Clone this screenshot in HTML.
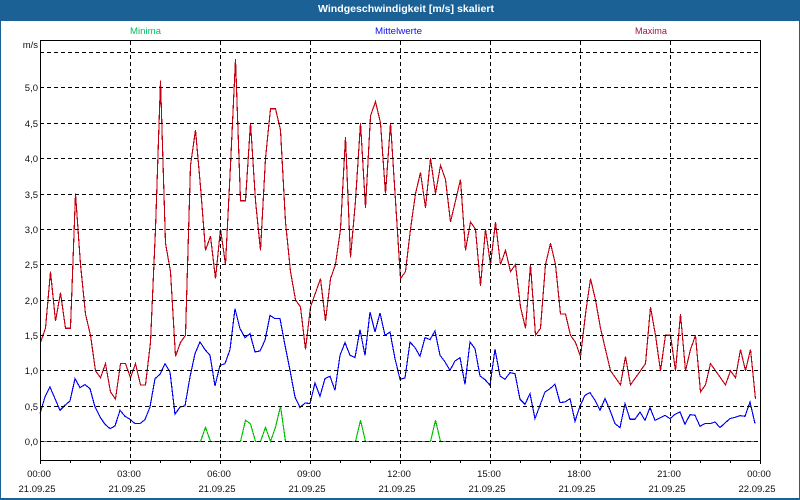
<!DOCTYPE html>
<html>
<head>
<meta charset="utf-8">
<style>
html,body{margin:0;padding:0;background:#fff;}
svg{display:block;font-family:"Liberation Sans",sans-serif;}
text{font-size:9.5px;fill:#111;}
.d{stroke:#000;stroke-width:1;stroke-dasharray:4 3;shape-rendering:crispEdges;fill:none;}
.s{fill:none;stroke-width:1.15;vector-effect:non-scaling-stroke;shape-rendering:crispEdges;}
</style>
</head>
<body>
<svg width="800" height="500" viewBox="0 0 800 500" xmlns="http://www.w3.org/2000/svg">
<rect width="800" height="500" fill="#1b6196"/>
<rect x="1" y="21" width="798" height="477" fill="#fff"/>
<text x="318" y="12" textLength="176" lengthAdjust="spacingAndGlyphs" style="font-size:10.5px;font-weight:bold;fill:#fff">Windgeschwindigkeit [m/s] skaliert</text>
<text x="130" y="34" textLength="31" lengthAdjust="spacingAndGlyphs" style="fill:#00c060">Minima</text>
<text x="375" y="34" textLength="47" lengthAdjust="spacingAndGlyphs" style="fill:#1010f0">Mittelwerte</text>
<text x="635" y="34" textLength="32" lengthAdjust="spacingAndGlyphs" style="fill:#a01050">Maxima</text>

<polyline class="s" stroke="#00c000" transform="translate(0.5,441.5) scale(1,-70.8)" points="40,0 200,0 205,0.2 210,0 240,0 245,0.3 250,0.25 255,0 260,0 265,0.2 270,0 275,0.2 280,0.5 285,0 355,0 360,0.3 365,0 430,0 435,0.3 440,0 755,0"/>

<polyline class="s" stroke="#c00010" transform="translate(0.5,441.5) scale(1,-70.8)" points="40,1.4 45,1.6 50,2.4 55,1.7 60,2.1 65,1.6 70,1.6 75,3.5 80,2.5 85,1.8 90,1.5 95,1 100,0.9 105,1.1 110,0.7 115,0.6 120,1.1 125,1.1 130,0.9 135,1.1 140,0.8 145,0.8 150,1.4 155,3 160,5.1 165,2.8 170,2.4 175,1.2 180,1.4 185,1.5 190,3.9 195,4.4 200,3.6 205,2.7 210,2.9 215,2.3 220,3 225,2.5 230,3.9 235,5.4 240,3.4 245,3.4 250,4.5 255,3.4 260,2.7 265,4 270,4.7 275,4.7 280,4.4 285,3.1 290,2.4 295,2 300,1.9 305,1.3 310,1.9 315,2.1 320,2.3 325,1.7 330,2.3 335,2.5 340,3 345,4.3 350,2.6 355,3.4 360,4.5 365,3.3 370,4.6 375,4.8 380,4.5 385,3.5 390,4.5 395,3.4 400,2.3 405,2.4 410,3 415,3.5 420,3.8 425,3.3 430,4 435,3.5 440,3.9 445,3.7 450,3.1 455,3.4 460,3.7 465,2.7 470,3.1 475,3 480,2.2 485,3 490,2.5 495,3.1 500,2.5 505,2.7 510,2.4 515,2.5 520,1.9 525,1.6 530,2.5 535,1.5 540,1.6 545,2.5 550,2.8 555,2.5 560,1.8 565,1.8 570,1.5 575,1.4 580,1.2 585,1.8 590,2.3 595,2 600,1.6 605,1.3 610,1 615,0.9 620,0.8 625,1.2 630,0.8 635,0.9 640,1 645,1.1 650,1.9 655,1.5 660,1 665,1.5 670,1.5 675,1 680,1.8 685,1 690,1.3 695,1.5 700,0.7 705,0.8 710,1.1 715,1 720,0.9 725,0.8 730,1 735,0.9 740,1.3 745,1 750,1.3 755,0.6"/>

<polyline class="s" stroke="#0000f0" transform="translate(0,290.3) scale(1,0.3333)" points="40,370 45,320 50,290 55,325 60,360 65,345 70,332 75,265 80,292 85,283 90,295 95,350 100,380 105,402 110,415 115,407 120,360 125,378 130,387 135,400 140,400 145,388 150,350 155,265 160,252 165,220 170,245 175,372 180,350 185,347 190,260 195,190 200,155 205,178 210,195 215,287 220,225 225,220 230,178 235,55 240,115 245,142 250,130 255,185 260,182 265,150 270,75 275,85 280,85 285,165 290,240 295,320 300,352 305,338 310,340 315,278 320,318 325,265 330,258 335,300 340,195 345,157 350,195 355,202 360,118 365,195 370,65 375,125 380,68 385,135 390,125 395,205 400,267 405,263 410,155 415,172 420,198 425,142 430,148 435,122 440,195 445,215 450,240 455,212 460,202 465,282 470,155 475,175 480,257 485,268 490,285 495,177 500,257 505,267 510,247 515,250 520,327 525,342 530,310 535,385 540,345 545,305 550,295 555,282 560,337 565,335 570,325 575,393 580,347 585,315 590,307 595,330 600,360 605,325 610,360 615,400 620,412 625,340 630,387 635,387 640,365 645,390 650,352 655,390 660,383 665,375 670,385 675,372 680,365 685,402 690,373 695,375 700,408 705,400 710,400 715,395 720,412 725,398 730,385 735,381 740,376 745,378 750,335 755,400"/>

<g class="d">
<path d="M40 52.5H760M40 87.5H760M40 123.5H760M40 158.5H760M40 194.5H760M40 229.5H760M40 264.5H760M40 300.5H760M40 335.5H760M40 370.5H760M40 406.5H760M40 441.5H760"/>
<path d="M130.5 41V460M220.5 41V460M310.5 41V460M400.5 41V460M490.5 41V460M580.5 41V460M670.5 41V460"/>
</g>

<rect x="40.5" y="40.5" width="720" height="420" fill="none" stroke="#000" shape-rendering="crispEdges"/>
<path d="M40.5 461V464M70.5 461V463M100.5 461V463M130.5 461V464M160.5 461V463M190.5 461V463M220.5 461V464M250.5 461V463M280.5 461V463M310.5 461V464M340.5 461V463M370.5 461V463M400.5 461V464M430.5 461V463M460.5 461V463M490.5 461V464M520.5 461V463M550.5 461V463M580.5 461V464M610.5 461V463M640.5 461V463M670.5 461V464M700.5 461V463M730.5 461V463M760.5 461V464" stroke="#000" fill="none" shape-rendering="crispEdges"/>

<g text-anchor="end">
<text x="38" y="48">m/s</text>
<text x="38" y="91">5,0</text>
<text x="38" y="127">4,5</text>
<text x="38" y="162">4,0</text>
<text x="38" y="198">3,5</text>
<text x="38" y="233">3,0</text>
<text x="38" y="268">2,5</text>
<text x="38" y="304">2,0</text>
<text x="38" y="339">1,5</text>
<text x="38" y="374">1,0</text>
<text x="38" y="410">0,5</text>
<text x="38" y="445">0,0</text>
</g>

<g text-anchor="middle">
<text x="39" y="477">00:00</text><text x="37" y="492">21.09.25</text>
<text x="129" y="477">03:00</text><text x="127" y="492">21.09.25</text>
<text x="219" y="477">06:00</text><text x="217" y="492">21.09.25</text>
<text x="309" y="477">09:00</text><text x="307" y="492">21.09.25</text>
<text x="399" y="477">12:00</text><text x="397" y="492">21.09.25</text>
<text x="489" y="477">15:00</text><text x="487" y="492">21.09.25</text>
<text x="579" y="477">18:00</text><text x="577" y="492">21.09.25</text>
<text x="669" y="477">21:00</text><text x="667" y="492">21.09.25</text>
<text x="759" y="477">00:00</text><text x="757" y="492">22.09.25</text>
</g>
</svg>
</body>
</html>
